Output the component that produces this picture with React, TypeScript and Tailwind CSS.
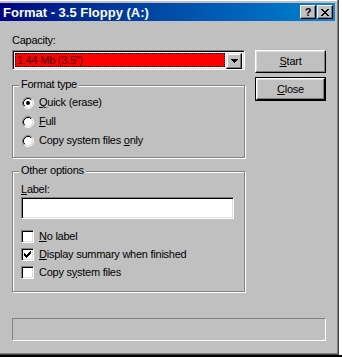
import type { ReactNode } from "react";

const font = "font-['Liberation_Sans',Arial,sans-serif]";

function Px({ rects, w, h }: { rects: number[][]; w: number; h: number }) {
  return (
    <svg width={w} height={h} viewBox={`0 0 ${w} ${h}`} shapeRendering="crispEdges">
      {rects.map(([x, y, rw], i) => (
        <rect key={i} x={x} y={y} width={rw} height={1} fill="#000" />
      ))}
    </svg>
  );
}

const closeGlyph = [
  [0, 0, 2], [6, 0, 2],
  [1, 1, 2], [5, 1, 2],
  [2, 2, 4],
  [3, 3, 2],
  [2, 4, 4],
  [1, 5, 2], [5, 5, 2],
  [0, 6, 2], [6, 6, 2],
];

const checkGlyph = [
  [6, 0, 1],
  [5, 1, 2],
  [0, 2, 1], [4, 2, 3],
  [0, 3, 2], [3, 3, 3],
  [0, 4, 5],
  [1, 5, 3],
  [2, 6, 1],
];

const arrowGlyph = [
  [0, 0, 7],
  [1, 1, 5],
  [2, 2, 3],
  [3, 3, 1],
];

function TitleButton({ children }: { children: ReactNode }) {
  return (
    <div className="w-[16px] h-[14px] bg-[#c0c0c0] border border-t-white border-l-white border-r-black border-b-black shadow-[inset_-1px_-1px_0_#808080] flex items-center justify-center">
      {children}
    </div>
  );
}

function Radio({ checked, children }: { checked?: boolean; children: ReactNode }) {
  return (
    <div className="h-[19px] flex items-center">
      <svg width="12" height="12" viewBox="0 0 12 12" className="ml-[9px] mr-[5px]">
        <circle cx="6" cy="6" r="4.5" fill="#fff" />
        <path d="M2.11 9.89 A5.5 5.5 0 0 1 9.89 2.11" stroke="#808080" fill="none" />
        <path d="M9.89 2.11 A5.5 5.5 0 0 1 2.11 9.89" stroke="#fff" fill="none" />
        <path d="M2.82 9.18 A4.5 4.5 0 0 1 9.18 2.82" stroke="#000" fill="none" />
        <path d="M9.18 2.82 A4.5 4.5 0 0 1 2.82 9.18" stroke="#dfdfdf" fill="none" />
        {checked && <circle cx="6" cy="6" r="2" fill="#000" />}
      </svg>
      <span>{children}</span>
    </div>
  );
}

function Check({ checked, children }: { checked?: boolean; children: ReactNode }) {
  return (
    <div className="h-[18px] flex items-center">
      <div className="w-[13px] h-[13px] bg-white border border-t-[#808080] border-l-[#808080] border-r-white border-b-white shadow-[inset_1px_1px_0_#000,inset_-1px_-1px_0_#dfdfdf] flex items-center justify-center mr-[5px]">
        {checked && <Px rects={checkGlyph} w={7} h={7} />}
      </div>
      <span>{children}</span>
    </div>
  );
}

function Group({ title, className, children }: { title: string; className: string; children: ReactNode }) {
  return (
    <div className={`relative border border-[#808080] shadow-[inset_1px_1px_0_#fff,1px_1px_0_#fff] ${className}`}>
      <span className="absolute -top-[8px] left-[6px] px-[2px] bg-[#c0c0c0] leading-[13px]">{title}</span>
      {children}
    </div>
  );
}

function Button({ children, isDefault }: { children: ReactNode; isDefault?: boolean }) {
  const inner = (
    <div className="h-full w-full bg-[#c0c0c0] border border-t-white border-l-white border-r-black border-b-black shadow-[inset_-1px_-1px_0_#808080,inset_1px_1px_0_#dfdfdf] flex items-center justify-center">
      {children}
    </div>
  );
  return isDefault ? (
    <div className="h-[24px] w-[71px] border border-black">{inner}</div>
  ) : (
    <div className="h-[23px] w-[71px]">{inner}</div>
  );
}

export default function App() {
  return (
    <div className={`w-[342px] h-[357px] bg-white flex flex-col ${font} text-[11px] leading-[13px] tracking-[-0.25px] text-black`}>
      <div className="w-[339px] h-[355px] bg-[#c0c0c0] border-r border-b border-[#404040] shadow-[inset_-1px_-1px_0_#808080,inset_0_1px_0_#fff] pt-[3px] flex flex-col">
        <div className="h-[18px] mr-[3px] bg-gradient-to-r from-[#000080] to-[#1084d0] flex items-center pl-[3px] pr-[2px]">
          <span className="text-white font-bold text-[13px] tracking-normal flex-1">Format - 3.5 Floppy (A:)</span>
          <div className="flex gap-[1px]">
            <TitleButton>
              <span className="font-bold text-[11px] leading-none">?</span>
            </TitleButton>
            <TitleButton>
              <Px rects={closeGlyph} w={8} h={7} />
            </TitleButton>
          </div>
        </div>

        <div className="pl-[12px] flex flex-col">
          <div className="flex">
            <div className="w-[233px] flex flex-col pt-[13px]">
              <span>Capacity:</span>
              <div className="mt-[3px] h-[20px] border border-t-[#808080] border-l-[#808080] border-r-white border-b-white shadow-[inset_1px_1px_0_#000,inset_-1px_-1px_0_#dfdfdf] bg-white flex p-[2px]">
                <div className="flex-1 bg-[#ff0000] outline outline-1 outline-dotted outline-black -outline-offset-1 flex items-center pl-[2px] text-[#400000]">
                  1.44 Mb (3.5")
                </div>
                <div className="w-[16px] h-[16px] ml-[1px] bg-[#c0c0c0] border border-t-[#dfdfdf] border-l-[#dfdfdf] border-r-black border-b-black shadow-[inset_-1px_-1px_0_#808080,inset_1px_1px_0_#fff] flex items-center justify-center">
                  <Px rects={arrowGlyph} w={7} h={4} />
                </div>
              </div>

              <Group title="Format type" className="mt-[15px] h-[73px] pt-[7px]">
                <Radio checked>
                  <u>Q</u>uick (erase)
                </Radio>
                <Radio>
                  <u>F</u>ull
                </Radio>
                <Radio>
                  Copy system files <u>o</u>nly
                </Radio>
              </Group>

              <Group title="Other options" className="mt-[13px] h-[121px] pt-[11px] pl-[8px]">
                <span>
                  <u>L</u>abel:
                </span>
                <div className="mt-[1px] w-[213px] h-[22px] bg-white border border-t-[#808080] border-l-[#808080] border-r-white border-b-white shadow-[inset_1px_1px_0_#000,inset_-1px_-1px_0_#dfdfdf]" />
                <div className="mt-[8px] flex flex-col">
                  <Check>
                    <u>N</u>o label
                  </Check>
                  <Check checked>
                    <u>D</u>isplay summary when finished
                  </Check>
                  <Check>
                    Copy s<u>y</u>stem files
                  </Check>
                </div>
              </Group>
            </div>

            <div className="ml-[10px] pt-[29px] flex flex-col gap-[4px]">
              <Button>
                <u>S</u>tart
              </Button>
              <Button isDefault>
                <u>C</u>lose
              </Button>
            </div>
          </div>

          <div className="mt-[26px] w-[314px] h-[23px] border border-t-[#808080] border-l-[#808080] border-r-white border-b-white" />
        </div>
      </div>
      <div className="flex-1 bg-black" />
    </div>
  );
}
